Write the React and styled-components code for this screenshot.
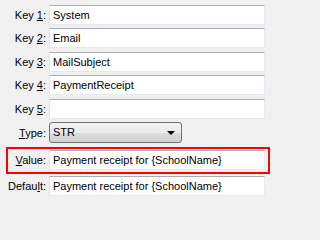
import React from "react";
import styled, { createGlobalStyle } from "styled-components";

const GlobalStyle = createGlobalStyle`
  html, body {
    margin: 0;
    padding: 0;
    background: #f0f0f0;
  }
  body {
    font-family: "Liberation Sans", Arial, sans-serif;
    font-size: 11px;
    color: #000;
  }
`;

const Form = styled.div`
  display: flex;
  flex-direction: column;
  padding-top: 5px;
  width: 271px;
  height: 201px;
  box-sizing: border-box;
`;

const Row = styled.div`
  display: grid;
  grid-template-columns: ${(p) => p.$labelWidth || 46}px 216px;
  column-gap: 3px;
  align-items: center;
  margin-top: ${(p) => p.$top || 0}px;
  height: ${(p) => p.$height || 20}px;
`;

const Highlight = styled.div`
  margin: 4px 0 0 6px;
  width: 264px;
  box-sizing: border-box;
  border: 2px solid #ff0000;
  padding: 1px 0 2px 0;
`;

const Label = styled.label`
  text-align: right;
  white-space: nowrap;
  line-height: 20px;

  u {
    text-decoration: underline;
    text-underline-offset: 1px;
  }
`;

const Field = styled.div`
  height: 20px;
  box-sizing: border-box;
  background: #fff;
  border: 1px solid #dbdfe6;
  border-top-color: #abadb3;
  border-left-color: #e2e3ea;
  border-right-color: #e3e9ef;
  border-bottom-color: #e3e9ef;
  padding-left: 3px;
  line-height: 18px;
  white-space: nowrap;
  overflow: hidden;
`;

const Select = styled.div`
  width: 133px;
  height: 21px;
  box-sizing: border-box;
  border: 1px solid #707070;
  border-radius: 3px;
  background: linear-gradient(
    to bottom,
    #f2f2f2 0%,
    #ebebeb 50%,
    #dddddd 50%,
    #cfcfcf 100%
  );
  display: flex;
  align-items: center;
  justify-content: space-between;
  padding: 0 6px 0 3px;
  line-height: 19px;
`;

const Arrow = styled.span`
  width: 0;
  height: 0;
  border-left: 4px solid transparent;
  border-right: 4px solid transparent;
  border-top: 4px solid #000;
  margin-top: 1px;
`;

const keys = ["System", "Email", "MailSubject", "PaymentReceipt", ""];
const tops = [0, 3, 4, 3, 4];

function KeyLabel({ prefix, hot, rest = "" }) {
  return (
    <Label>
      {prefix}
      <u>{hot}</u>
      {rest}:
    </Label>
  );
}

export default function App() {
  return (
    <>
      <GlobalStyle />
      <Form>
        {keys.map((value, i) => (
          <Row key={i} $top={tops[i]}>
            <KeyLabel prefix="Key " hot={String(i + 1)} />
            <Field>{value}</Field>
          </Row>
        ))}
        <Row $top={3} $height={21}>
          <KeyLabel prefix="" hot="T" rest="ype" />
          <Select>
            <span>STR</span>
            <Arrow />
          </Select>
        </Row>
        <Highlight>
          <Row $labelWidth={38}>
            <KeyLabel prefix="" hot="V" rest="alue" />
            <Field>Payment receipt for {"{SchoolName}"}</Field>
          </Row>
        </Highlight>
        <Row $top={2}>
          <KeyLabel prefix="Defau" hot="l" rest="t" />
          <Field>Payment receipt for {"{SchoolName}"}</Field>
        </Row>
      </Form>
    </>
  );
}
